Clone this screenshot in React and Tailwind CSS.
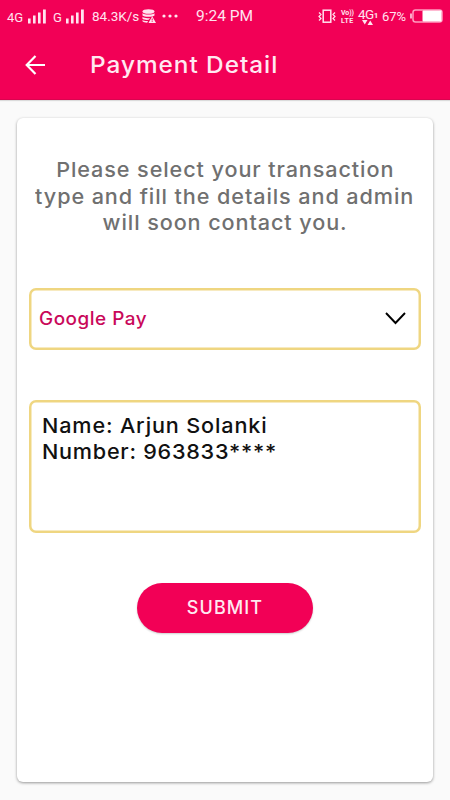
const SignalBars = () => (
  <svg width="19" height="15" viewBox="0 0 19 15" fill="#ffe3ef">
    <rect x="0" y="9.5" width="2.6" height="5" />
    <rect x="5" y="6.5" width="2.6" height="8" />
    <rect x="10" y="3.5" width="2.6" height="11" />
    <rect x="15" y="0.5" width="2.8" height="14" />
  </svg>
);

const DatabaseIcon = () => (
  <svg width="14" height="14" viewBox="0 0 14 14" fill="#ffe3ef">
    <ellipse cx="6.5" cy="2.5" rx="6" ry="2.3" />
    <path d="M.5 4.2c1.5 1.7 10.5 1.7 12 0v2.3c-1.5 1.7-10.5 1.7-12 0z" />
    <path d="M.5 7.7c1.5 1.5 5 1.7 7.5 1.2L6.8 10.8c-2.5.3-5.3-.1-6.3-1z" />
    <path d="M.5 11c1 .9 3.5 1.2 5.5 1L5.2 13.7C3 13.7 1 13.2.5 12.3z" />
    <path d="M10.2 7.2 14 13.9H6.5z" />
    <path d="M10.2 9.5v2M10.2 12.2v.8" stroke="#f20056" strokeWidth="0.9" />
  </svg>
);

const VibrateIcon = () => (
  <svg width="18" height="15" viewBox="0 0 18 15" fill="none" stroke="#ffe3ef" strokeWidth="1.5">
    <rect x="5.2" y="1.2" width="7.6" height="12" />
    <path d="M1 3.5l2 2-2 2 2 2-2 2M17 3.5l-2 2 2 2-2 2 2 2" strokeWidth="1.2" />
  </svg>
);

const BatteryIcon = () => (
  <svg width="33" height="14" viewBox="0 0 33 14">
    <path d="M1 4.5v5" stroke="#ffe3ef" strokeWidth="1.5" />
    <rect x="3" y="1" width="29" height="12" rx="2.5" fill="none" stroke="#ff9cc0" strokeWidth="1.5" />
    <rect x="12.5" y="1.5" width="19" height="11" rx="1" fill="#fff" />
  </svg>
);

const StatusBar = () => (
  <div className="flex h-8 items-center pl-[7px] pr-[7px] font-[Roboto,sans-serif] text-[#ffe3ef]">
    <span className="mt-[3px] w-[21px] text-[13px] leading-none">4G</span>
    <SignalBars />
    <span className="mt-[3px] ml-[6px] w-[13px] text-[13px] leading-none">G</span>
    <SignalBars />
    <span className="mt-px ml-[7px] w-[50px] text-[13.5px] leading-none whitespace-nowrap">84.3K/s</span>
    <DatabaseIcon />
    <svg className="ml-[6px]" width="16" height="4" viewBox="0 0 16 4" fill="#ffe3ef">
      <circle cx="2" cy="2" r="1.6" />
      <circle cx="8" cy="2" r="1.6" />
      <circle cx="14" cy="2" r="1.6" />
    </svg>
    <span className="mt-[2px] ml-[18px] w-[60px] text-[15.5px] leading-none whitespace-nowrap">9:24 PM</span>
    <div className="ml-auto flex items-center">
      <VibrateIcon />
      <div className="mt-px ml-[5px] flex w-[15px] flex-col text-[7px] leading-[8px] font-bold">
        <span className="tracking-[-0.1px]">Vo))</span>
        <span className="tracking-[0.4px]">LTE</span>
      </div>
      <div className="ml-[2px] flex w-[22px] flex-col">
        <div className="flex items-start">
          <span className="text-[13.5px] leading-[12px] tracking-[-0.5px]">4G</span>
          <span className="mt-[3px] text-[8px] leading-[9px] font-bold">1</span>
        </div>
        <svg className="ml-[4px]" width="11" height="5" viewBox="0 0 11 5" fill="#ffe3ef">
          <path d="M0 0h5.5L2.75 4.5zM5.5 5H11L8.25.5z" />
        </svg>
      </div>
      <span className="ml-[2px] w-[28px] text-[13px] leading-none">67%</span>
      <BatteryIcon />
    </div>
  </div>
);

const message = [
  "Please select your transaction",
  "type and fill the details and admin",
  "will soon contact you.",
];

const App = () => {
  return (
    <div className="flex h-[800px] w-[450px] flex-col bg-[#fafafa] font-[Inter,sans-serif]">
      <header className="h-[100px] bg-[#f20056] shadow-[0_1px_1px_rgba(0,0,0,0.12),inset_0_-1px_0_#d9044f]">
        <StatusBar />
        <div className="flex h-[66px] items-center pl-[25px]">
          <svg width="21" height="20" viewBox="0 0 21 20" fill="none" stroke="#fff" strokeWidth="2.2">
            <path d="M20 10H2M10.5 1 1.7 10l8.8 9" />
          </svg>
          <h1 className="ml-[44px] origin-left scale-x-[1.06] text-[23px] font-medium tracking-[0.9px] whitespace-nowrap text-[#ffe9f1]">
            Payment Detail
          </h1>
        </div>
      </header>

      <main className="mx-[17px] mt-[18px] flex h-[664px] flex-col rounded-[6px] bg-white px-[12px] pt-[39px] shadow-[0_1px_3px_rgba(0,0,0,0.4)]">
        <div className="flex flex-col items-center text-[20.5px] leading-[26.5px] font-[450] text-[#707070]">
          {message.map((line) => (
            <p key={line} className="scale-x-[1.055] tracking-[0.85px] whitespace-nowrap">
              {line}
            </p>
          ))}
        </div>

        <button className="mt-[51px] flex h-[62px] items-center justify-between rounded-[7px] pr-[15px] pl-[10px] shadow-[inset_0_0_0_2.5px_#efd681]">
          <span className="origin-left scale-x-[1.05] text-[18px] font-medium tracking-[0.5px] text-[#c9085a]">
            Google Pay
          </span>
          <svg width="21" height="13" viewBox="0 0 21 13" fill="none" stroke="#000" strokeWidth="1.9">
            <path d="M1 1l9.5 10L20 1" />
          </svg>
        </button>

        <div className="mt-[50px] h-[133px] rounded-[7px] pt-[13px] pl-[13px] text-[20.5px] leading-[26px] font-[450] text-[#111] shadow-[inset_0_0_0_2.5px_#efd681]">
          <p className="origin-left scale-x-[1.055] tracking-[0.8px]">Name: Arjun Solanki</p>
          <p className="origin-left scale-x-[1.055] tracking-[0.7px]">Number: 963833****</p>
        </div>

        <button className="mt-[50px] h-[50px] w-[176px] self-center rounded-full bg-[#f20056] text-[18px] font-medium tracking-[1.1px] text-[#ffe9f1] shadow-[0_1px_2px_rgba(0,0,0,0.2)]">
          SUBMIT
        </button>
      </main>
    </div>
  );
};

export default App;
